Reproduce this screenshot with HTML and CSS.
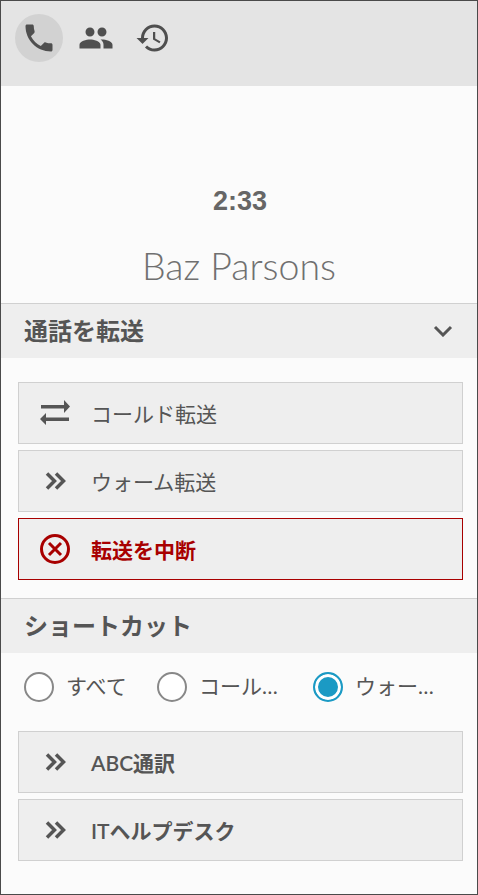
FILE: index.html
```html
<!DOCTYPE html>
<html lang="ja">
<head>
  <meta charset="UTF-8" />
  <title>通話</title>
  <link rel="stylesheet" href="styles.css">
</head>
<body>
  <div class="panel">
    <nav class="tabs">
      <span class="tab active">
        <svg class="tab-icon" viewBox="0 0 24 24"><path d="M6.62 10.79c1.44 2.83 3.76 5.14 6.59 6.59l2.2-2.2c.27-.27.67-.36 1.02-.24 1.12.37 2.33.57 3.57.57.55 0 1 .45 1 1V20c0 .55-.45 1-1 1-9.39 0-17-7.61-17-17 0-.55.45-1 1-1h3.5c.55 0 1 .45 1 1 0 1.25.2 2.45.57 3.57.11.35.03.74-.25 1.02l-2.2 2.2z"/></svg>
      </span>
      <span class="tab">
        <svg class="tab-icon" viewBox="0 0 24 24"><path d="M16 11c1.66 0 2.99-1.34 2.99-3S17.66 5 16 5c-1.66 0-3 1.34-3 3s1.34 3 3 3zm-8 0c1.66 0 2.99-1.34 2.99-3S9.66 5 8 5C6.34 5 5 6.34 5 8s1.34 3 3 3zm0 2c-2.33 0-7 1.17-7 3.5V19h14v-2.5c0-2.33-4.67-3.5-7-3.5zm8 0c-.29 0-.62.02-.97.05 1.16.84 1.97 1.97 1.97 3.45V19h6v-2.5c0-2.33-4.67-3.5-7-3.5z"/></svg>
      </span>
      <span class="tab">
        <svg class="tab-icon" viewBox="0 0 24 24"><path d="M13 3c-4.97 0-9 4.03-9 9H1l3.89 3.89.07.14L9 12H6c0-3.87 3.13-7 7-7s7 3.13 7 7-3.13 7-7 7c-1.93 0-3.68-.79-4.94-2.06l-1.42 1.42C8.27 19.99 10.51 21 13 21c4.97 0 9-4.03 9-9s-4.03-9-9-9zm-1 5v5l4.28 2.54.72-1.21-3.5-2.08V8H12z"/></svg>
      </span>
    </nav>

    <div class="call-info">
      <div class="call-time">2:33</div>
      <div class="call-name">Baz Parsons</div>
    </div>

    <div class="section-head">
      <span>通話を転送</span>
      <svg class="caret" viewBox="0 0 20 12"><path d="M2 2l8 8 8-8"/></svg>
    </div>
    <div class="actions first">
      <button class="action">
        <span class="action-icon">
          <svg class="swap" viewBox="0 0 30 26"><path d="M1 5h23V0l6 6.500-6 6.500V8.500H1zM29 17.500H6V13l-6 6 6 6v-4h23z"/></svg>
        </span>
        <span>コールド転送</span>
      </button>
      <button class="action">
        <span class="action-icon"><svg class="dbl" viewBox="0 0 21 20"><path d="M2 2.500l7.500 7.500-7.500 7.500M11 2.500l7.500 7.500-7.500 7.500"/></svg></span>
        <span>ウォーム転送</span>
      </button>
      <button class="action danger">
        <span class="action-icon">
          <svg class="cancel" viewBox="0 0 30 30"><circle cx="15" cy="15" r="13.500"/><path d="M9 9l12 12M21 9L9 21"/></svg>
        </span>
        <span>転送を中断</span>
      </button>
    </div>

    <div class="section-head second"><span>ショートカット</span></div>
    <div class="filters">
      <label class="radio r-all"><span class="dot"></span><span class="radio-text">すべて</span></label>
      <label class="radio r-cold"><span class="dot"></span><span class="radio-text">コール…</span></label>
      <label class="radio r-warm on"><span class="dot"></span><span class="radio-text">ウォー…</span></label>
    </div>
    <div class="actions">
      <button class="action strong">
        <span class="action-icon"><svg class="dbl" viewBox="0 0 21 20"><path d="M2 2.500l7.500 7.500-7.500 7.500M11 2.500l7.500 7.500-7.500 7.500"/></svg></span>
        <span>ABC通訳</span>
      </button>
      <button class="action strong">
        <span class="action-icon"><svg class="dbl" viewBox="0 0 21 20"><path d="M2 2.500l7.500 7.500-7.500 7.500M11 2.500l7.500 7.500-7.500 7.500"/></svg></span>
        <span>ITヘルプデスク</span>
      </button>
    </div>
  </div>
</body>
</html>
```

FILE: styles.css
```css
:root {
  --text: #555;
  --line: #d0d0d0;
  --bg: #fbfbfb;
  --row: #eee;
  --danger: #a80000;
  --accent: #1b9ac4;
}

* {
  box-sizing: border-box;
}

html, body {
  margin: 0;
  height: 100%;
}

body {
  font-family: Lato, "Noto Sans CJK JP", sans-serif;
  color: var(--text);
  background: var(--bg);
}

.panel {
  height: 895px;
  border: 1px solid #4a4a4a;
  overflow: hidden;
}

.tabs {
  display: flex;
  gap: 9px;
  height: 85px;
  padding: 13px 14px;
  background: #e4e4e4;
}

.tab {
  width: 48px;
  height: 48px;
  border-radius: 50%;
  display: flex;
  align-items: center;
  justify-content: center;
}

.tab.active {
  background: #d2d2d2;
}

.tab-icon {
  width: 36px;
  height: 36px;
  fill: #4f4f4f;
}

.call-info {
  height: 217px;
  text-align: center;
}

.call-time {
  padding: 98px 0 0 2px;
  font-family: "Liberation Sans", sans-serif;
  font-size: 27px;
  font-weight: 700;
  line-height: 34px;
  color: #666;
}

.call-name {
  margin-top: 25px;
  font-size: 37.500px;
  font-weight: 300;
  line-height: 46px;
  color: #707070;
}

.section-head {
  display: flex;
  align-items: center;
  justify-content: space-between;
  height: 55px;
  padding: 0 24px 4px 23px;
  border-top: 1px solid var(--line);
  background: var(--row);
  font-size: 24px;
  font-weight: 700;
}

.caret {
  width: 20px;
  height: 12px;
  margin-top: 4px;
  fill: none;
  stroke: var(--text);
  stroke-width: 3;
}

.actions {
  display: flex;
  flex-direction: column;
  gap: 6px;
  padding: 0 14px 0 17px;
}

.actions.first {
  padding-top: 24px;
  padding-bottom: 18px;
}

.action {
  display: flex;
  align-items: center;
  height: 62px;
  padding: 0 0 0 1px;
  border: 1px solid var(--line);
  background: var(--row);
  color: var(--text);
  font-family: inherit;
  font-size: 21px;
  text-align: left;
}

.action-icon {
  display: flex;
  align-items: center;
  justify-content: center;
  width: 70px;
  margin-right: 1px;
  flex: none;
}

.swap {
  width: 30px;
  height: 26px;
  fill: var(--text);
}

.dbl {
  width: 21px;
  height: 20px;
  fill: none;
  stroke: var(--text);
  stroke-width: 3.500;
}

.cancel {
  width: 30px;
  height: 30px;
  fill: none;
  stroke: var(--danger);
  stroke-width: 3;
}

.action.danger {
  border: 1px solid var(--danger);
  color: var(--danger);
  font-weight: 700;
}

.action.strong {
  font-weight: 600;
}

.filters {
  display: flex;
  align-items: center;
  height: 78px;
  padding: 0 0 10px 23px;
}

.radio {
  display: flex;
  align-items: center;
  gap: 14px;
  font-size: 21px;
  line-height: 30px;
}

.radio-text {
  margin: -2px 0 0 -2px;
}

.r-all {
  width: 133px;
}

.r-cold {
  width: 156px;
}

.dot {
  width: 30px;
  height: 30px;
  flex: none;
  border: 2px solid #888;
  border-radius: 50%;
  background: #fff;
}

.radio.on .dot {
  border-color: var(--accent);
  background: var(--accent);
  box-shadow: inset 0 0 0 3px #fff;
}
```
